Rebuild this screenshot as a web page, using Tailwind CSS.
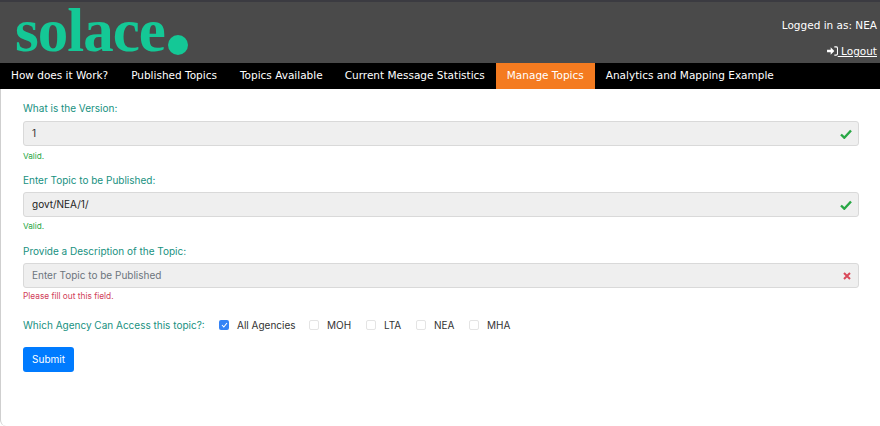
<!DOCTYPE html>
<html lang="en">
<head>
    <meta charset="UTF-8">
    <title>Manage Topics</title>
    <script src="https://cdn.jsdelivr.net/npm/@tailwindcss/browser@4"></script>
</head>
<body class="bg-white h-[426px] overflow-hidden font-['Inter',sans-serif]">
    <!-- Header -->
    <header class="h-[63px] bg-[#4a4a4a] border-t-2 border-[#3b3b41] flex justify-between pl-[15px] pr-[3px] font-['DejaVu_Sans',sans-serif]">
        <div class="flex items-end h-[58px] text-[#14c896]">
            <span class="font-['Liberation_Serif',serif] font-bold text-[61px] leading-[58px] tracking-[-1px]">solace</span>
            <span class="w-[20px] h-[20px] rounded-full bg-[#14c896] ml-[3px] mb-[5px]"></span>
        </div>
        <div class="flex flex-col items-end text-white text-[10.500px] pt-[16px] gap-[12px] leading-[14px]">
            <span>Logged in as: NEA</span>
            <a href="#" class="flex items-center">
                <svg width="11" height="10" viewBox="0 0 12 11" fill="none"><path d="M0 4h4V1.500L8 5.500 4 9.500V7H0z" fill="#fff"/><path d="M8 1h2a1.500 1.500 0 0 1 1.500 1.500v6A1.500 1.500 0 0 1 10 10H8" stroke="#fff" stroke-width="1.200"/></svg>
                <span class="underline whitespace-pre"> Logout</span>
            </a>
        </div>
    </header>

    <!-- Nav -->
    <nav class="h-[26px] bg-black flex text-white text-[10.500px] font-['DejaVu_Sans',sans-serif]">
        <a href="#" class="flex items-center pl-[11px] pr-[12px]">How does it Work?</a>
        <a href="#" class="flex items-center pl-[11px] pr-[12px]">Published Topics</a>
        <a href="#" class="flex items-center px-[11px]">Topics Available</a>
        <a href="#" class="flex items-center px-[11px]">Current Message Statistics</a>
        <a href="#" class="flex items-center px-[11px] bg-[#f47b20]">Manage Topics</a>
        <a href="#" class="flex items-center px-[11px]">Analytics and Mapping Example</a>
    </nav>

    <!-- Form -->
    <main class="h-[337px] border-l border-[#cfcfcf] rounded-bl-[6px] pl-[22px] pr-[21px] pt-[12px] text-[10px]">
        <label class="block text-[#17917f] leading-[14px] mb-[6px]">What is the Version:</label>
        <div class="h-[25px] bg-[#efefef] border border-[#d9d9d9] rounded-[3px] flex items-center justify-between pl-[8px] pr-[6px] text-[#333]">
            <span>1</span>
            <svg width="12" height="10" viewBox="0 0 12 10"><path d="M1 5.500 4.300 8.700 11 1.500" fill="none" stroke="#28a745" stroke-width="2.400"/></svg>
        </div>
        <p class="text-[8.200px] text-[#28a745] leading-[11px] mt-[5px]">Valid.</p>

        <label class="block text-[#17917f] leading-[14px] mt-[11px] mb-[5px]">Enter Topic to be Published:</label>
        <div class="h-[25px] bg-[#efefef] border border-[#d9d9d9] rounded-[3px] flex items-center justify-between pl-[8px] pr-[6px] text-[#222]">
            <span>govt/NEA/1/</span>
            <svg width="12" height="10" viewBox="0 0 12 10"><path d="M1 5.500 4.300 8.700 11 1.500" fill="none" stroke="#28a745" stroke-width="2.400"/></svg>
        </div>
        <p class="text-[8.200px] text-[#28a745] leading-[11px] mt-[4px]">Valid.</p>

        <label class="block text-[#17917f] leading-[14px] mt-[12px] mb-[5px]">Provide a Description of the Topic:</label>
        <div class="h-[25px] bg-[#efefef] border border-[#d9d9d9] rounded-[3px] flex items-center justify-between pl-[8px] pr-[7px] text-[#6c757d]">
            <span>Enter Topic to be Published</span>
            <svg width="8" height="8" viewBox="0 0 8 8"><path d="M1 1 7 7M7 1 1 7" fill="none" stroke="#d9495a" stroke-width="2"/></svg>
        </div>
        <p class="text-[8.300px] text-[#d0405a] leading-[11px] mt-[3px]">Please fill out this field.</p>

        <div class="flex items-center mt-[16px] h-[14px]">
            <span class="text-[#17917f] w-[196px]">Which Agency Can Access this topic?:</span>
            <span class="w-[10px] h-[10px] rounded-[2px] bg-[#3583f6] flex items-center justify-center">
                <svg width="7" height="6" viewBox="0 0 7 6"><path d="M1 3 2.800 5 6 1" fill="none" stroke="#fff" stroke-width="1.100"/></svg>
            </span>
            <span class="ml-[8px] w-[72px] text-[#333]">All Agencies</span>
            <span class="w-[10px] h-[10px] rounded-[2px] border border-[#e4e4e4]"></span>
            <span class="ml-[8px] w-[39px] text-[#333]">MOH</span>
            <span class="w-[10px] h-[10px] rounded-[2px] border border-[#e4e4e4]"></span>
            <span class="ml-[8px] w-[32px] text-[#333]">LTA</span>
            <span class="w-[10px] h-[10px] rounded-[2px] border border-[#e4e4e4]"></span>
            <span class="ml-[8px] w-[35px] text-[#333]">NEA</span>
            <span class="w-[10px] h-[10px] rounded-[2px] border border-[#e4e4e4]"></span>
            <span class="ml-[8px] text-[#333]">MHA</span>
        </div>

        <button class="block mt-[15px] w-[51px] h-[25px] bg-[#007bff] text-white rounded-[3px]">Submit</button>
    </main>
</body>
</html>
